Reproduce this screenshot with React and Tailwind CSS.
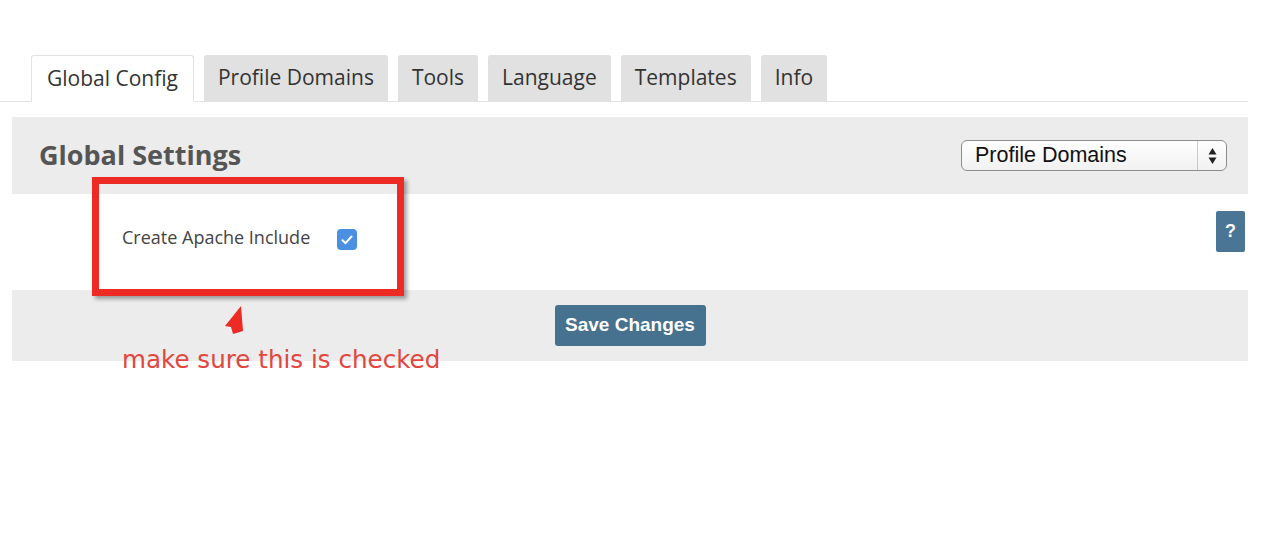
import React from "react";

const tabs = ["Global Config", "Profile Domains", "Tools", "Language", "Templates", "Info"];

function Tab({ label, active }) {
  return (
    <div
      className={
        active
          ? "relative -mb-px h-[47px] flex items-center px-[15px] bg-white border border-[#e3e3e3] border-b-white rounded-t-[3px] text-[21px] text-[#333]"
          : "h-[46px] flex items-center px-[14px] bg-[#e1e1e1] rounded-t-[3px] text-[21px] text-[#333]"
      }
    >
      {label}
    </div>
  );
}

function SelectBox() {
  return (
    <div className="relative w-[266px] h-[31px] flex items-center rounded-[6px] border border-[#8d8d8d] bg-gradient-to-b from-white to-[#f1f1f1] shadow-[inset_0_1px_0_#fff]" style={{ fontFamily: "'Liberation Sans', Arial, sans-serif" }}>
      <span className="pl-[13px] text-[21.5px] text-[#111] flex-1 leading-none">Profile Domains</span>
      <span className="h-full w-[29px] border-l border-[#c9c9c9] flex items-center justify-center">
        <svg width="9" height="18" viewBox="0 0 9 18">
          <path d="M4.5 1 L8.5 7.5 L0.5 7.5 Z" fill="#222" />
          <path d="M4.5 17 L8.5 10.5 L0.5 10.5 Z" fill="#222" />
        </svg>
      </span>
    </div>
  );
}

export default function App() {
  return (
    <div className="w-[1280px] h-[559px] bg-white relative overflow-hidden" style={{ fontFamily: "'Open Sans', 'Noto Sans', sans-serif" }}>
      <div className="w-[1248px] pt-[55px]">
        {/* tab strip */}
        <div className="flex items-end gap-[10px] pl-[31px] border-b border-[#e3e3e3]">
          {tabs.map((t, i) => (
            <Tab key={t} label={t} active={i === 0} />
          ))}
        </div>

        {/* settings panel */}
        <div className="ml-[12px] mt-[15px]">
          <div className="h-[77px] bg-[#ececec] flex items-center justify-between pl-[27px] pr-[21px]">
            <h2 className="text-[27px] font-bold text-[#555]">Global Settings</h2>
            <SelectBox />
          </div>

          <div className="h-[96px] bg-white flex items-start justify-between pr-[3px]">
            <div className="flex items-center pl-[110px] pt-[30px]">
              <span className="text-[18px] text-[#444]">Create Apache Include</span>
              <span className="ml-[27px] mt-[4px] w-[20px] h-[21px] rounded-[4px] bg-[#4a90e2] flex items-center justify-center">
                <svg width="12" height="10" viewBox="0 0 12 10">
                  <path d="M1.5 5.2 L4.5 8.2 L10.5 1.5" fill="none" stroke="#fff" strokeWidth="2" strokeLinecap="round" strokeLinejoin="round" />
                </svg>
              </span>
            </div>
            <button className="mt-[17px] w-[29px] h-[41px] rounded-[2px] bg-[#4a7594] text-white text-[18px] font-bold flex items-center justify-center" style={{ fontFamily: "'Liberation Sans', Arial, sans-serif" }}>
              ?
            </button>
          </div>

          <div className="h-[71px] bg-[#ececec] flex items-center justify-center">
            <button className="w-[151px] h-[41px] rounded-[3px] bg-[#46718f] text-white text-[19px] font-bold" style={{ fontFamily: "'Liberation Sans', Arial, sans-serif" }}>
              Save Changes
            </button>
          </div>
        </div>
      </div>

      {/* annotation overlay */}
      <div className="absolute left-[92px] top-[177px] w-[312px] h-[119px] border-[7px] border-[#ee2a24] shadow-[3px_3px_4px_rgba(0,0,0,0.35)]" />
      <svg className="absolute left-0 top-0" width="1280" height="559" style={{ pointerEvents: "none" }}>
        <path d="M241 306 L225 326 L231 327 L233 334 L243 331 Z" fill="#ee2a24" />
      </svg>
      <div className="absolute left-[122px] top-[344px] text-[24.6px] text-[#e2463f] leading-[32px]" style={{ fontFamily: "'DejaVu Sans', Verdana, sans-serif" }}>
        make sure this is checked
      </div>
    </div>
  );
}
